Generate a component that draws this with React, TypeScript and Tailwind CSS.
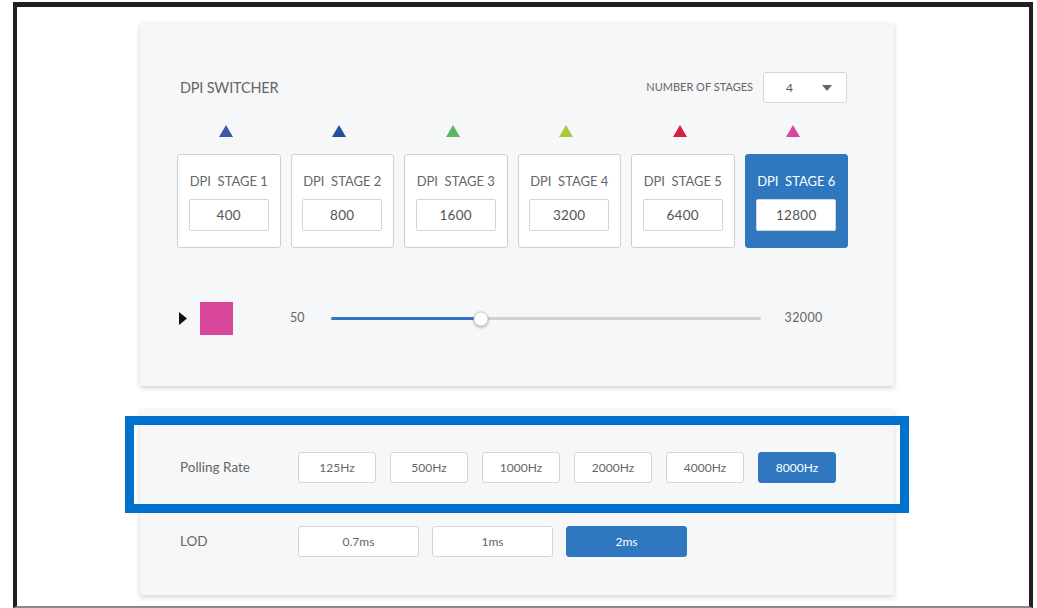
import React from "react";

const stages = [
  { label: "DPI  STAGE 1", value: "400", color: "#3b5ca9" },
  { label: "DPI  STAGE 2", value: "800", color: "#23509f" },
  { label: "DPI  STAGE 3", value: "1600", color: "#5bb85d" },
  { label: "DPI  STAGE 4", value: "3200", color: "#a5cb3c" },
  { label: "DPI  STAGE 5", value: "6400", color: "#d81f43" },
  { label: "DPI  STAGE 6", value: "12800", color: "#da479f" },
];

const pollingRates = ["125Hz", "500Hz", "1000Hz", "2000Hz", "4000Hz", "8000Hz"];
const lods = ["0.7ms", "1ms", "2ms"];

const Triangle = ({ color }: { color: string }) => (
  <svg width="14" height="12" viewBox="0 0 14 12">
    <polygon points="7,0 14,12 0,12" fill={color} />
  </svg>
);

const OptionButton = ({ label, active, wide }: { label: string; active: boolean; wide?: boolean }) => (
  <button
    className={`h-[31px] ${wide ? "w-[121px]" : "w-[78px]"} rounded-[3px] border text-[12px] ${
      active ? "bg-[#2f78bf] border-[#2f78bf] text-white" : "bg-white border-[#d6d6d6] text-[#666]"
    }`}
  >
    {label}
  </button>
);

const App = () => {
  const selected = 5;
  const sliderPct = 35;

  return (
    <div className="relative w-[1037px] h-[608px] bg-white overflow-hidden" style={{ fontFamily: "Lato, 'Noto Sans', sans-serif" }}>
      {/* outer frame */}
      <div className="ml-[13px] mt-[2px] w-[1020px] h-[606px] border-x-4 border-t-[5px] border-b-2 border-[#231f20] border-b-[#8a8a8a] bg-white">
        {/* DPI switcher card */}
        <section className="ml-[123px] mt-[16px] w-[754px] h-[363px] bg-[#f6f7f9] shadow-[0_2px_5px_rgba(0,0,0,0.18)] pt-[49px]">
          <div className="flex items-center justify-between pl-[40px] pr-[47px] h-[31px]">
            <h2 className="text-[14.5px] text-[#666] tracking-[-0.2px]">DPI SWITCHER</h2>
            <div className="flex items-center gap-[10px]">
              <span className="text-[11px] text-[#666]">NUMBER OF STAGES</span>
              <div className="w-[84px] h-[31px] bg-white border border-[#d6d6d6] rounded-[3px] flex items-center justify-between pl-[22px] pr-[14px]">
                <span className="text-[12px] text-[#555]">4</span>
                <svg width="10" height="6" viewBox="0 0 10 6">
                  <polygon points="0,0 10,0 5,6" fill="#666" />
                </svg>
              </div>
            </div>
          </div>

          <div className="grid grid-cols-6 gap-[10px] pl-[37px] pr-[46px] mt-[22px]">
            {stages.map((s) => (
              <div key={s.label} className="flex justify-center pr-[6px] h-[12px]">
                <Triangle color={s.color} />
              </div>
            ))}
          </div>

          <div className="grid grid-cols-6 gap-[10px] pl-[37px] pr-[46px] mt-[17px]">
            {stages.map((s, i) => {
              const active = i === selected;
              return (
                <div
                  key={s.label}
                  className={`h-[94px] rounded-[3px] border flex flex-col items-center pt-[18px] ${
                    active ? "bg-[#2f78bf] border-[#2f78bf]" : "bg-white border-[#cfcfcf]"
                  }`}
                >
                  <span className={`text-[13px] whitespace-pre leading-[16px] ${active ? "text-white" : "text-[#666]"}`}>{s.label}</span>
                  <div className="mt-[10px] w-[80px] h-[32px] bg-white border border-[#d6d6d6] rounded-[2px] flex items-center justify-center text-[13.5px] tracking-[0.3px] text-[#555]">
                    {s.value}
                  </div>
                </div>
              );
            })}
          </div>

          {/* sensitivity slider */}
          <div className="flex items-center h-[33px] mt-[54px] pl-[39px]">
            <svg width="8" height="13" viewBox="0 0 8 13">
              <polygon points="0,0 8,6.5 0,13" fill="#111" />
            </svg>
            <div className="ml-[13px] w-[33px] h-[33px] bg-[#d9479a]" />
            <span className="ml-[57px] text-[12.5px] text-[#666]">50</span>
            <div className="relative ml-[26px] w-[430px] h-[3px] bg-[#d0d0d0] rounded-full">
              <div className="h-full bg-[#2f78bf] rounded-full" style={{ width: `${sliderPct}%` }} />
              <div
                className="absolute top-1/2 w-[15px] h-[15px] -translate-x-1/2 -translate-y-1/2 rounded-full bg-white border border-[#cfcfcf] shadow-[0_1px_3px_rgba(0,0,0,0.3)]"
                style={{ left: `${sliderPct}%` }}
              />
            </div>
            <span className="ml-[24px] text-[12.5px] tracking-[0.4px] text-[#666]">32000</span>
          </div>
        </section>

        {/* polling rate + lift-off distance card */}
        <section className="ml-[123px] mt-[24px] w-[754px] h-[185px] bg-[#f6f7f9] shadow-[0_2px_5px_rgba(0,0,0,0.18)] pt-[42px] pl-[40px]">
          <div className="flex items-center">
            <span className="w-[118px] text-[13.5px] text-[#666]">Polling Rate</span>
            <div className="flex gap-[14px]">
              {pollingRates.map((r, i) => (
                <OptionButton key={r} label={r} active={i === pollingRates.length - 1} />
              ))}
            </div>
          </div>
          <div className="flex items-center mt-[43px]">
            <span className="w-[118px] text-[13.5px] text-[#666]">LOD</span>
            <div className="flex gap-[13px]">
              {lods.map((l, i) => (
                <OptionButton key={l} label={l} active={i === lods.length - 1} wide />
              ))}
            </div>
          </div>
        </section>
      </div>

      {/* highlight around the polling rate row */}
      <div className="absolute left-[125px] top-[416px] w-[784px] h-[97px] border-[9px] border-[#0072ce] pointer-events-none" />
    </div>
  );
};

export default App;
